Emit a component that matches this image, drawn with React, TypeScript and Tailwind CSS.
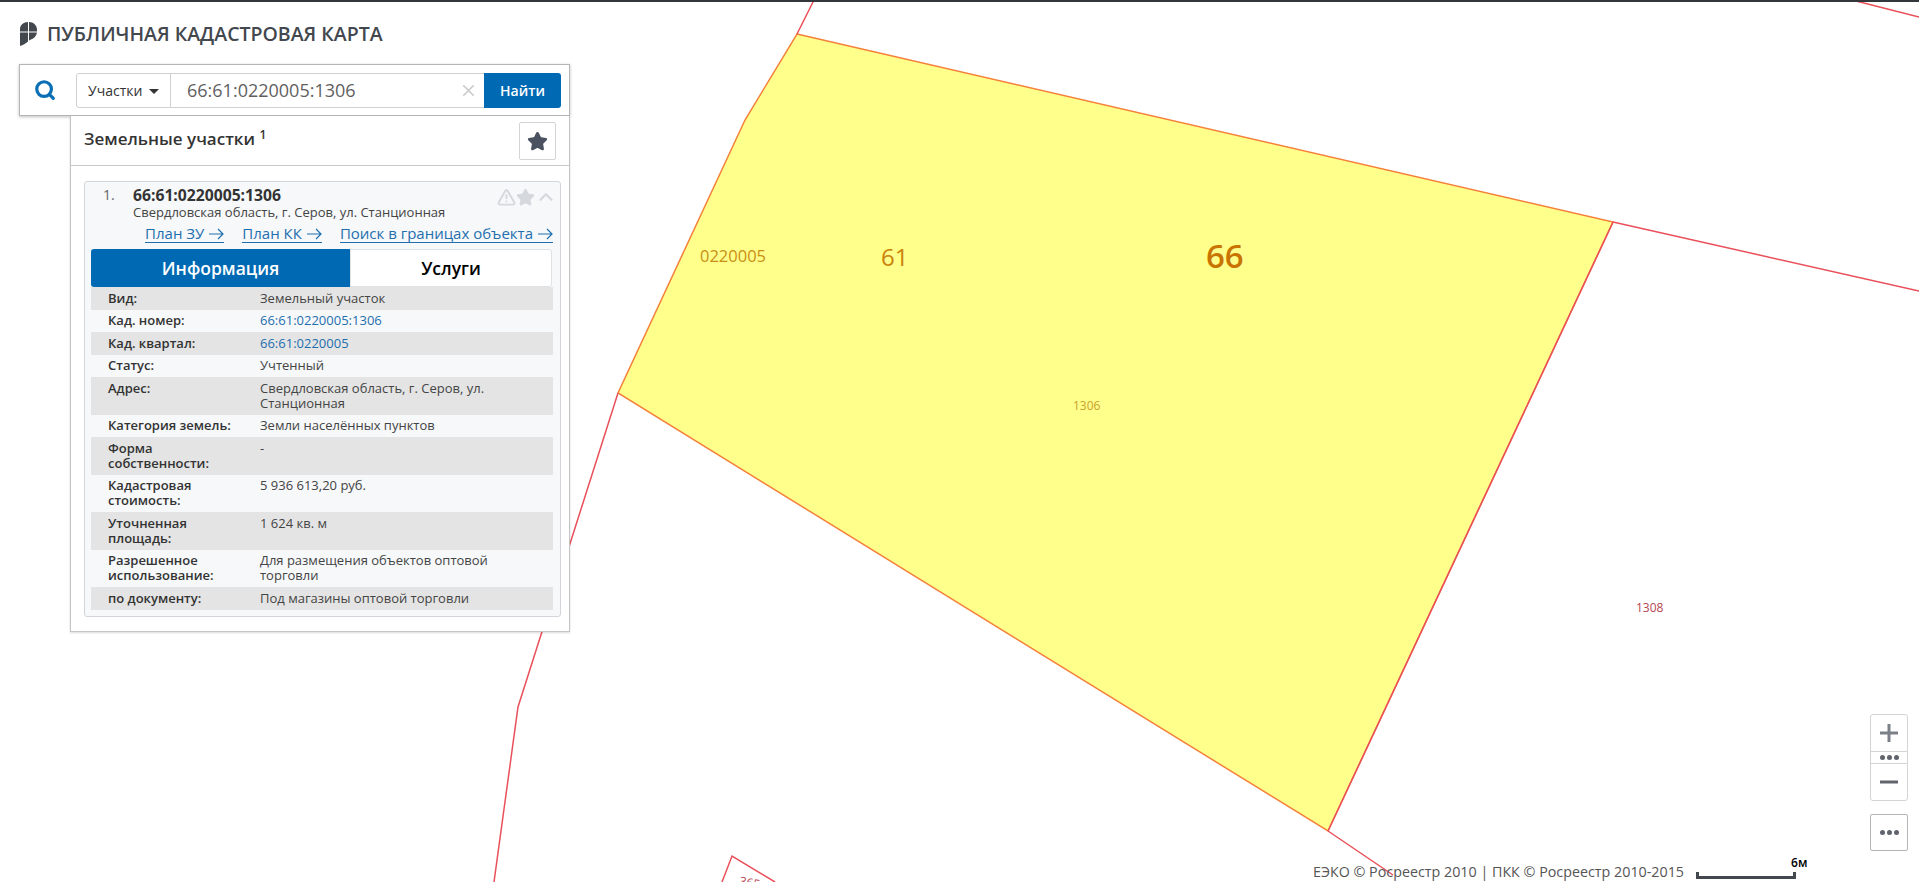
import { ChevronUp, Search, Star, TriangleAlert, X } from "lucide-react"

const rows = [
  { label: "Вид:", value: "Земельный участок" },
  { label: "Кад. номер:", value: "66:61:0220005:1306", link: true },
  { label: "Кад. квартал:", value: "66:61:0220005", link: true },
  { label: "Статус:", value: "Учтенный" },
  { label: "Адрес:", value: "Свердловская область, г. Серов, ул. Станционная" },
  { label: "Категория земель:", value: "Земли населённых пунктов" },
  { label: "Форма собственности:", value: "-" },
  { label: "Кадастровая стоимость:", value: "5 936 613,20 руб." },
  { label: "Уточненная площадь:", value: "1 624 кв. м" },
  { label: "Разрешенное использование:", value: "Для размещения объектов оптовой торговли" },
  { label: "по документу:", value: "Под магазины оптовой торговли" },
]

function MapLayer() {
  return (
    <svg className="absolute inset-0" width="1919" height="882" viewBox="0 0 1919 882" fill="none">
      {/* parcel */}
      <polygon points="797,34 1613,222 1328,831 618,393 745,120" fill="#ffff8c" stroke="#f5803a" strokeWidth="1.5" />
      {/* neighbours */}
      <g stroke="#e9505a" strokeWidth="1.5">
        <path d="M797 34 L814 0" />
        <path d="M1613 222 L1919 291" />
        <path d="M1852 0 L1919 17" />
        <path d="M618 393 L518 707 L494 882" />
        <path d="M1328 831 L1393 875" />
        <path d="M722 882 L732 856 L775 882" />
        <path d="M1613 222 L1328 831" />
      </g>
      <text x="700" y="262" fontFamily="'Open Sans', sans-serif" fontSize="16.5" fill="#c98f12">0220005</text>
      <text x="881" y="266" fontFamily="'Open Sans', sans-serif" fontSize="24" fill="#c98208">61</text>
      <text x="1206" y="268" fontFamily="'Open Sans', sans-serif" fontSize="33" fontWeight="600" fill="#c97400">66</text>
      <text x="1073" y="410" fontFamily="'Open Sans', sans-serif" fontSize="12" fill="#c9a02c">1306</text>
      <text x="1636" y="612" fontFamily="'Open Sans', sans-serif" fontSize="12" fill="#b5454f">1308</text>
      <text x="0" y="0" transform="translate(739 885) rotate(10)" fontFamily="'Open Sans', sans-serif" fontSize="12" fill="#b5454f">365</text>
    </svg>
  )
}

function Logo() {
  return (
    <svg width="17" height="24" viewBox="0 0 17 24" fill="#43474e">
      <path d="M8 0 V9.5 H0 V7 C0 3 3.5 0 8 0 Z" />
      <path d="M9 0 C13.5 0 17 3.5 17 8 V9.5 H9 Z" />
      <path d="M0 10.5 H8 V19.5 C5.5 21.5 3 23 0 24 Z" />
      <path d="M9 10.5 H17 C16.5 13 15 15.5 13 16.5 L9 18.5 Z" />
    </svg>
  )
}

function Dots() {
  return (
    <span className="flex gap-[2px]">
      <span className="h-[5px] w-[5px] rounded-full bg-[#60646c]" />
      <span className="h-[5px] w-[5px] rounded-full bg-[#60646c]" />
      <span className="h-[5px] w-[5px] rounded-full bg-[#60646c]" />
    </span>
  )
}

function PlanLink({ text }: { text: string }) {
  return (
    <a className="flex items-center gap-[5px] border-b border-[#1f6fae] text-[15px] leading-[17px] text-[#1f6fae]">
      {text}
      <svg width="15" height="12" viewBox="0 0 15 12" fill="none" stroke="#1f6fae" strokeWidth="1.2">
        <path d="M0 6 H14 M9 1 L14 6 L9 11" />
      </svg>
    </a>
  )
}

export default function App() {
  return (
    <div className="relative h-[882px] w-full overflow-hidden bg-white font-['Open_Sans',sans-serif] text-[#333]">
      <MapLayer />
      <div className="absolute inset-x-0 top-0 h-[2px] bg-[#33363b]" />

      {/* left column */}
      <div className="absolute left-[19px] top-[22px] flex w-[551px] flex-col">
        <div className="flex h-[24px] items-center gap-[10px] pl-[1px]">
          <Logo />
          <span className="text-[19.5px] leading-[24px] font-semibold text-[#43474e]">ПУБЛИЧНАЯ КАДАСТРОВАЯ КАРТА</span>
        </div>

        <div className="mt-[18px] flex h-[52px] items-center border border-[#b5b5b5] bg-white pr-[8px] shadow-[0_1px_3px_rgba(0,0,0,0.25)]">
          <div className="flex w-[56px] justify-center pr-[6px]">
            <Search size={22} strokeWidth={3.5} className="text-[#0a6fb5]" />
          </div>
          <div className="flex h-[35px] flex-1">
            <div className="flex w-[95px] items-center gap-[7px] rounded-l-[3px] border border-[#d0d0d0] pl-[11px] text-[14px] text-[#333]">
              Участки
              <span className="mt-[2px] h-0 w-0 border-x-[5px] border-t-[5px] border-x-transparent border-t-[#333]" />
            </div>
            <div className="flex flex-1 items-center justify-between border-y border-[#d0d0d0] pl-[16px] pr-[6px] text-[18px] text-[#5f5f5f]">
              66:61:0220005:1306
              <X size={19} className="text-[#c9c9c9]" />
            </div>
            <button className="w-[77px] rounded-r-[3px] bg-[#0069b4] text-[14px] font-semibold text-white">Найти</button>
          </div>
        </div>

        <div className="ml-[51px] flex flex-col border-x border-b border-[#c4c4c4] bg-white pb-[14px] shadow-[0_1px_2px_rgba(0,0,0,0.15)]">
          <div className="flex h-[50px] items-start justify-between border-b border-[#c9c9c9] pl-[13px] pr-[13px] pt-[6px]">
            <span className="mt-[6px] text-[17px] leading-[22px] font-semibold text-[#333]">
              Земельные участки <sup className="text-[12px]">1</sup>
            </span>
            <div className="flex h-[38px] w-[37px] items-center justify-center rounded-[2px] border border-[#d4d4d4]">
              <Star size={21} fill="#4a5160" stroke="#4a5160" />
            </div>
          </div>

          <div className="ml-[13px] mr-[8px] mt-[15px] flex flex-col rounded-[3px] border border-[#d2d6da] bg-[#f6f8fa] pb-[6px]">
            <div className="flex items-start pl-[18px] pr-[3px] pt-[4px]">
              <span className="w-[30px] text-[14px] leading-[18px] text-[#666]">1.</span>
              <div className="flex-1">
                <div className="text-[15.7px] leading-[18px] font-bold text-[#333]">66:61:0220005:1306</div>
                <div className="text-[13px] leading-[17px] text-[#444]">Свердловская область, г. Серов, ул. Станционная</div>
              </div>
              <div className="flex items-center text-[#d5d8dc]">
                <TriangleAlert size={19} strokeWidth={2.5} />
                <Star size={19} fill="#d5d8dc" />
                <ChevronUp size={22} strokeWidth={2.5} />
              </div>
            </div>
            <div className="mt-[4px] flex justify-end gap-[18px] pr-[7px]">
              <PlanLink text="План ЗУ" />
              <PlanLink text="План КК" />
              <PlanLink text="Поиск в границах объекта" />
            </div>
            <div className="ml-[6px] mr-[8px] mt-[6px] flex h-[38px]">
              <div className="flex w-[259px] items-center justify-center rounded-l-[3px] bg-[#0069b4] text-[17.5px] font-semibold text-white">Информация</div>
              <div className="flex flex-1 items-center justify-center rounded-r-[3px] border border-[#dfe3e6] bg-white text-[17.5px] font-semibold text-black">Услуги</div>
            </div>
            <div className="ml-[6px] mr-[7px] flex flex-col">
              {rows.map((row, i) => (
                <div key={row.label} className={i % 2 === 0 ? "flex bg-[#e4e4e4] py-[3.75px]" : "flex py-[3.75px]"}>
                  <div className="w-[169px] shrink-0 pl-[17px] pr-[24px] text-[13px] leading-[15px] font-semibold text-[#333]">{row.label}</div>
                  <div className={row.link ? "flex-1 pr-[40px] text-[13px] leading-[15px] text-[#1f6fae]" : "flex-1 pr-[40px] text-[13px] leading-[15px] text-[#444]"}>{row.value}</div>
                </div>
              ))}
            </div>
          </div>
        </div>
      </div>

      {/* zoom controls */}
      <div className="absolute left-[1870px] top-[714px] flex w-[38px] flex-col items-stretch">
        <div className="flex flex-col rounded-[3px] border border-[#d4d4d4] bg-white">
          <div className="flex h-[37px] items-center justify-center border-b border-[#d4d4d4]">
            <svg width="20" height="20" viewBox="0 0 20 20" stroke="#7b8088" strokeWidth="3"><path d="M10 1 V19 M1 10 H19" /></svg>
          </div>
          <div className="flex h-[12px] items-center justify-center border-b border-[#d4d4d4]"><Dots /></div>
          <div className="flex h-[36px] items-center justify-center">
            <svg width="20" height="6" viewBox="0 0 20 6" stroke="#60646c" strokeWidth="3"><path d="M1 3 H19" /></svg>
          </div>
        </div>
        <div className="mt-[13px] flex h-[37px] items-center justify-center rounded-[2px] border border-[#b5b5b5] bg-white"><Dots /></div>
      </div>

      {/* attribution and scale */}
      <div className="absolute left-[1313px] top-[864px] flex h-[18px] items-end">
        <span className="text-[14.3px] leading-[20px] text-[#555]">ЕЭКО © Росреестр 2010 | ПКК © Росреестр 2010-2015</span>
        <div className="relative mb-[3px] ml-[12px] h-[7px] w-[100px] border-x-[3px] border-b-[3px] border-[#43474e]">
          <span className="absolute left-[92px] top-[-17px] text-[12px] leading-[16px] font-semibold text-black">6м</span>
        </div>
      </div>
    </div>
  )
}
